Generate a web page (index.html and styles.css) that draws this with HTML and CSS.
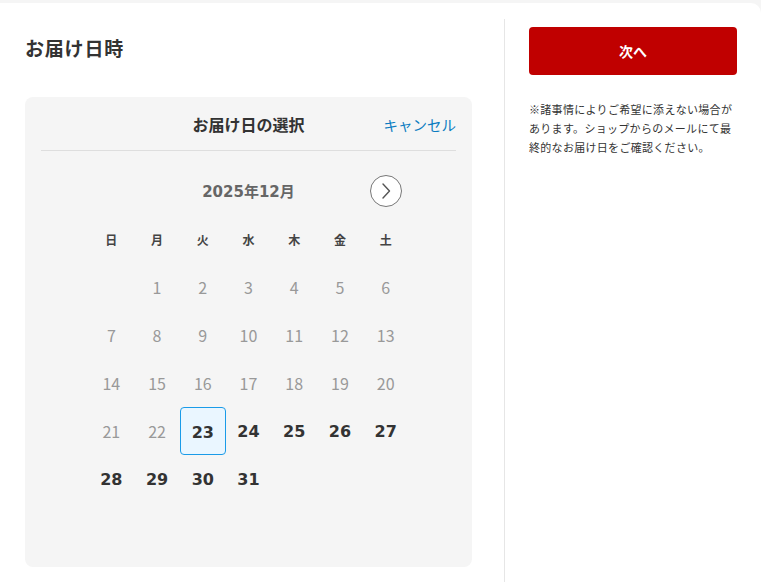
FILE: index.html
```html
<!DOCTYPE html>
<html lang="ja">
<head>
  <meta charset="UTF-8" />
  <meta name="viewport" content="width=device-width, initial-scale=1.0"/>
  <title>お届け日時</title>
  <link rel="stylesheet" href="styles.css">
</head>
<body>
  <div class="page">
    <main class="main">
      <h1 class="title">お届け日時</h1>

      <section class="picker">
        <header class="picker-head">
          <span></span>
          <h2>お届け日の選択</h2>
          <a href="#" class="cancel">キャンセル</a>
        </header>

        <div class="calendar">
          <div class="month">2025年12月</div>
          <button class="next-month" aria-label="次の月">
            <svg width="32" height="32" viewBox="0 0 32 32">
              <path d="M13 9 L19.5 16 L13 23" fill="none" stroke="#555" stroke-width="1.4" stroke-linecap="round" stroke-linejoin="round"/>
            </svg>
          </button>

          <div class="wday">日</div>
          <div class="wday">月</div>
          <div class="wday">火</div>
          <div class="wday">水</div>
          <div class="wday">木</div>
          <div class="wday">金</div>
          <div class="wday">土</div>

          <div class="day"></div>
          <div class="day off">1</div>
          <div class="day off">2</div>
          <div class="day off">3</div>
          <div class="day off">4</div>
          <div class="day off">5</div>
          <div class="day off">6</div>

          <div class="day off">7</div>
          <div class="day off">8</div>
          <div class="day off">9</div>
          <div class="day off">10</div>
          <div class="day off">11</div>
          <div class="day off">12</div>
          <div class="day off">13</div>

          <div class="day off">14</div>
          <div class="day off">15</div>
          <div class="day off">16</div>
          <div class="day off">17</div>
          <div class="day off">18</div>
          <div class="day off">19</div>
          <div class="day off">20</div>

          <div class="day off">21</div>
          <div class="day off">22</div>
          <div class="day on selected">23</div>
          <div class="day on">24</div>
          <div class="day on">25</div>
          <div class="day on">26</div>
          <div class="day on">27</div>

          <div class="day on">28</div>
          <div class="day on">29</div>
          <div class="day on">30</div>
          <div class="day on">31</div>
        </div>
      </section>
    </main>

    <aside class="side">
      <button class="next-step">次へ</button>
      <p class="note">※諸事情によりご希望に添えない場合があります。ショップからのメールにて最終的なお届け日をご確認ください。</p>
    </aside>
  </div>
</body>
</html>
```

FILE: styles.css
```css
* {
  box-sizing: border-box;
}
body {
  margin: 0;
  font-family: "Noto Sans CJK JP", sans-serif;
  background: #f5f5f5;
  color: #333;
}
.page {
  display: flex;
  margin-top: 3px;
  min-height: calc(100vh - 3px);
  background: #fff;
  border-top-right-radius: 10px;
}
.main {
  width: 504px;
  padding: 32px 32px 0 25px;
}
.title {
  margin: 0 0 36px;
  font-size: 19px;
  line-height: 26px;
  letter-spacing: 0.8px;
  font-weight: bold;
  color: #333;
}
.picker {
  width: 447px;
  height: 470px;
  background: #f5f5f5;
  border-radius: 8px;
}
.picker-head {
  display: grid;
  grid-template-columns: 1fr auto 1fr;
  align-items: center;
  height: 54px;
  margin: 0 16px;
  padding-top: 1px;
  border-bottom: 1px solid #dedede;
}
.picker-head h2 {
  margin: 0;
  font-size: 16px;
  font-weight: bold;
  color: #333;
}
.cancel {
  justify-self: end;
  font-size: 14.5px;
  color: #0b7cc1;
  text-decoration: none;
}
.calendar {
  display: grid;
  grid-template-columns: repeat(7, 1fr);
  grid-auto-rows: 48px;
  width: 320px;
  margin: 16px auto 0;
}
.month {
  grid-column: 2 / 7;
  align-self: center;
  margin-top: -2px;
  text-align: center;
  font-family: "DejaVu Sans", "Noto Sans CJK JP", sans-serif;
  font-size: 15px;
  font-weight: bold;
  color: #666;
}
.next-month {
  justify-self: center;
  align-self: center;
  width: 32px;
  height: 32px;
  padding: 0;
  border: 1px solid #777;
  border-radius: 50%;
  background: #fff;
  cursor: pointer;
}
.next-month svg {
  display: block;
  margin: -1px;
}
.wday {
  display: flex;
  align-items: center;
  justify-content: center;
  font-size: 12px;
  font-weight: bold;
  color: #444;
}
.day {
  display: flex;
  align-items: center;
  justify-content: center;
  font-size: 16px;
}
.day.off {
  color: #999;
}
.day.on {
  font-family: "DejaVu Sans", "Noto Sans CJK JP", sans-serif;
  font-weight: bold;
  color: #333;
  cursor: pointer;
}
.day.selected {
  border: 1px solid #1a9be8;
  border-radius: 4px;
  background: #eaf6ff;
  padding-top: 2px;
}
.side {
  width: 257px;
  margin-top: 16px;
  padding: 8px 24px 0 24px;
  border-left: 1px solid #e6e6e6;
}
.next-step {
  display: block;
  width: 208px;
  height: 48px;
  border: none;
  border-radius: 4px;
  background: #c00000;
  color: #fff;
  font-family: "Noto Sans CJK JP", sans-serif;
  font-size: 14px;
  font-weight: bold;
  cursor: pointer;
}
.note {
  margin: 25px 0 0;
  font-size: 11px;
  line-height: 19px;
  letter-spacing: 0.3px;
  color: #333;
}
```
